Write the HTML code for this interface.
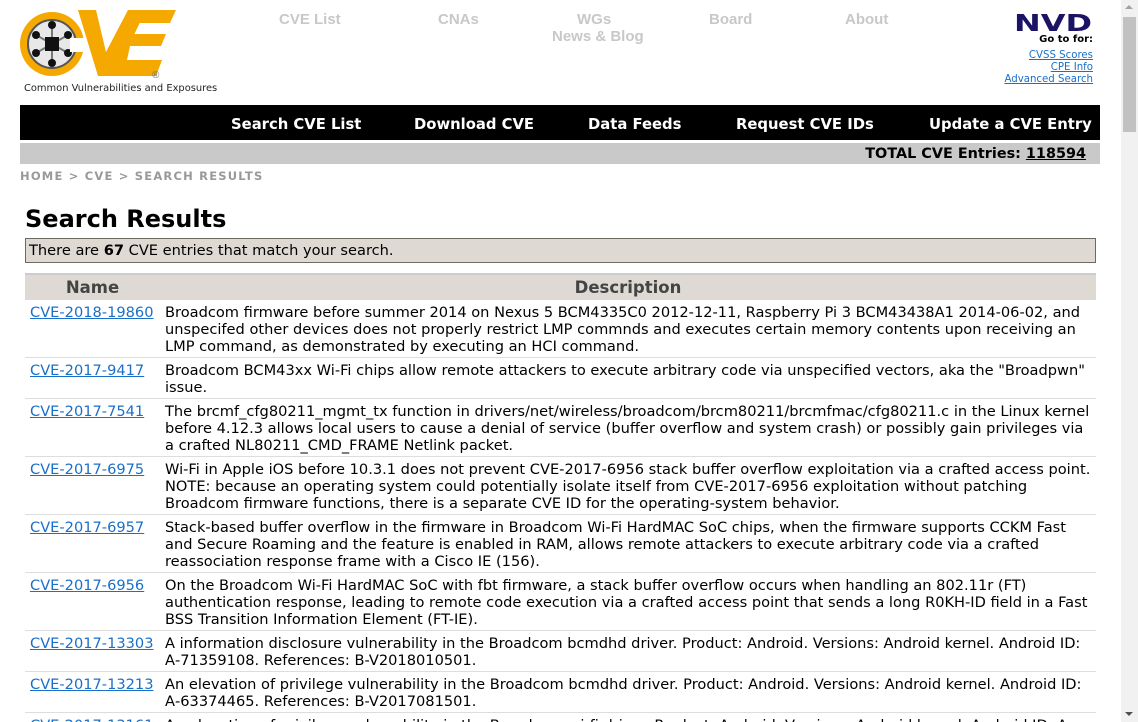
<!DOCTYPE html>
<html><head><meta charset="utf-8"><style>
*{margin:0;padding:0;box-sizing:border-box}
html,body{width:1138px;height:722px;overflow:hidden;background:#fff}
body{font-family:"DejaVu Sans","Liberation Sans",sans-serif;font-size:14.6px;color:#000;position:relative}
a{color:#1a6fc8;text-decoration:underline}
.top a{position:absolute;font-family:"Liberation Sans",sans-serif;font-weight:bold;font-size:15px;color:#c8c8c8;text-decoration:none}
.nav{position:absolute;left:20px;top:105px;width:1080px;height:35px;background:#000}
.nav span{position:absolute;top:11px;color:#fff;font-weight:bold;font-size:14.8px;white-space:nowrap;font-family:"DejaVu Sans","Liberation Sans",sans-serif}
.gray{position:absolute;left:20px;top:143px;width:1080px;height:21px;background:#c9c9c9;font-weight:bold;font-size:14.4px}
.crumb{position:absolute;left:20px;top:169px;font-size:11.5px;font-weight:bold;color:#999;letter-spacing:1.2px}
h1{position:absolute;left:25px;top:205px;font-size:24px;font-weight:bold}
.msg{position:absolute;left:25px;top:238px;width:1071px;height:25px;background:#dedad3;border:1px solid #6e6a60;padding:3px 0 0 3px;font-size:14.6px}
table{position:absolute;left:25px;top:273px;width:1071px;border-collapse:collapse}
th{background:#dedad3;color:#444;font-size:16.5px;font-weight:bold;height:26px;border-top:2px solid #ccc}
td{vertical-align:top;padding:4px 5px 2px 5px;line-height:17px;border-bottom:1px solid #ddd;font-size:14.6px}
td:first-child{white-space:nowrap;width:135px}
.sb{position:absolute;left:1121px;top:0;width:17px;height:722px;background:#f1f1f1}
</style></head><body>
<svg style="position:absolute;left:18px;top:8px" width="160" height="75" viewBox="0 0 160 75">
<circle cx="34" cy="36" r="32" fill="#f5a800"/>
<circle cx="34" cy="36" r="24" fill="#e8e8e8" stroke="#555" stroke-width="2"/>
<g stroke="#777" stroke-width="2"><line x1="34" y1="18" x2="34" y2="54"/><line x1="18" y1="27" x2="50" y2="45"/><line x1="50" y1="27" x2="18" y2="45"/></g>
<g fill="#111"><circle cx="34" cy="17" r="4"/><circle cx="34" cy="55" r="4"/><circle cx="18" cy="27" r="4"/><circle cx="50" cy="27" r="4"/><circle cx="18" cy="45" r="4"/><circle cx="50" cy="45" r="4"/><rect x="27" y="29" width="14" height="14"/></g>
<rect x="52" y="30" width="14" height="14" fill="#fff"/>
<polygon points="60,2 78,2 88,44 110,2 128,2 96,68 80,68" fill="#f5a800"/>
<polygon points="112,2 158,2 152,15 118,15 116,26 148,26 143,38 112,38 109,52 144,52 138,68 95,68" fill="#f5a800"/>
<text x="134" y="70" font-size="10" fill="#777" font-family="Liberation Sans">®</text>
</svg>
<div style="position:absolute;left:24px;top:83px;font-size:9.9px;color:#222">Common Vulnerabilities and Exposures</div>
<div class="top"><a style="left:279px;top:11px">CVE List</a><a style="left:438px;top:11px">CNAs</a><a style="left:577px;top:11px">WGs</a><a style="left:552px;top:28px">News &amp; Blog</a><a style="left:709px;top:11px">Board</a><a style="left:845px;top:11px">About</a></div>
<svg style="position:absolute;left:1014px;top:12px" width="80" height="20" viewBox="0 0 80 20"><text x="0" y="19" font-family="DejaVu Sans" font-weight="bold" font-size="23" fill="#1b1464" textLength="78" lengthAdjust="spacingAndGlyphs">NVD</text></svg>
<div style="position:absolute;right:45px;top:34px;font-size:10px;font-weight:bold;text-align:right">Go to for:</div>
<div style="position:absolute;right:45px;top:50px;font-size:10.2px;text-align:right;line-height:12px"><a>CVSS Scores</a><br><a>CPE Info</a><br><a>Advanced Search</a></div>
<div class="nav"><span style="left:211px">Search CVE List</span><span style="left:394px">Download CVE</span><span style="left:568px">Data Feeds</span><span style="left:716px">Request CVE IDs</span><span style="left:909px">Update a CVE Entry</span></div>
<div class="gray"><span style="position:absolute;right:14px;top:3px">TOTAL CVE Entries: <u>118594</u></span></div>
<div class="crumb">HOME &gt; CVE &gt; SEARCH RESULTS</div>
<h1>Search Results</h1>
<div class="msg">There are <b>67</b> CVE entries that match your search.</div>
<table>
<tr><th>Name</th><th>Description</th></tr>
<tr><td><a>CVE-2018-19860</a></td><td>Broadcom firmware before summer 2014 on Nexus 5 BCM4335C0 2012-12-11, Raspberry Pi 3 BCM43438A1 2014-06-02, and unspecifed other devices does not properly restrict LMP commnds and executes certain memory contents upon receiving an LMP command, as demonstrated by executing an HCI command.</td></tr>
<tr><td><a>CVE-2017-9417</a></td><td>Broadcom BCM43xx Wi-Fi chips allow remote attackers to execute arbitrary code via unspecified vectors, aka the "Broadpwn" issue.</td></tr>
<tr><td><a>CVE-2017-7541</a></td><td>The brcmf_cfg80211_mgmt_tx function in drivers/net/wireless/broadcom/brcm80211/brcmfmac/cfg80211.c in the Linux kernel before 4.12.3 allows local users to cause a denial of service (buffer overflow and system crash) or possibly gain privileges via a crafted NL80211_CMD_FRAME Netlink packet.</td></tr>
<tr><td><a>CVE-2017-6975</a></td><td>Wi-Fi in Apple iOS before 10.3.1 does not prevent CVE-2017-6956 stack buffer overflow exploitation via a crafted access point. NOTE: because an operating system could potentially isolate itself from CVE-2017-6956 exploitation without patching Broadcom firmware functions, there is a separate CVE ID for the operating-system behavior.</td></tr>
<tr><td><a>CVE-2017-6957</a></td><td>Stack-based buffer overflow in the firmware in Broadcom Wi-Fi HardMAC SoC chips, when the firmware supports CCKM Fast and Secure Roaming and the feature is enabled in RAM, allows remote attackers to execute arbitrary code via a crafted reassociation response frame with a Cisco IE (156).</td></tr>
<tr><td><a>CVE-2017-6956</a></td><td>On the Broadcom Wi-Fi HardMAC SoC with fbt firmware, a stack buffer overflow occurs when handling an 802.11r (FT) authentication response, leading to remote code execution via a crafted access point that sends a long R0KH-ID field in a Fast BSS Transition Information Element (FT-IE).</td></tr>
<tr><td><a>CVE-2017-13303</a></td><td>A information disclosure vulnerability in the Broadcom bcmdhd driver. Product: Android. Versions: Android kernel. Android ID: A&#8209;71359108. References: B-V2018010501.</td></tr>
<tr><td><a>CVE-2017-13213</a></td><td>An elevation of privilege vulnerability in the Broadcom bcmdhd driver. Product: Android. Versions: Android kernel. Android ID: A&#8209;63374465. References: B-V2017081501.</td></tr>
<tr><td><a>CVE-2017-13161</a></td><td>An elevation of privilege vulnerability in the Broadcom wi-fi driver. Product: Android. Versions: Android kernel. Android ID: A-</td></tr>
</table>
<div class="sb"><div style="position:absolute;left:2px;top:17px;width:13px;height:115px;background:#c1c1c1"></div>
<div style="position:absolute;left:4px;top:5px;width:0;height:0;border-left:4px solid transparent;border-right:4px solid transparent;border-bottom:4px solid #a3a3a3"></div>
<div style="position:absolute;left:4px;top:712px;width:0;height:0;border-left:4px solid transparent;border-right:4px solid transparent;border-top:4px solid #505050"></div></div>
</body></html>
